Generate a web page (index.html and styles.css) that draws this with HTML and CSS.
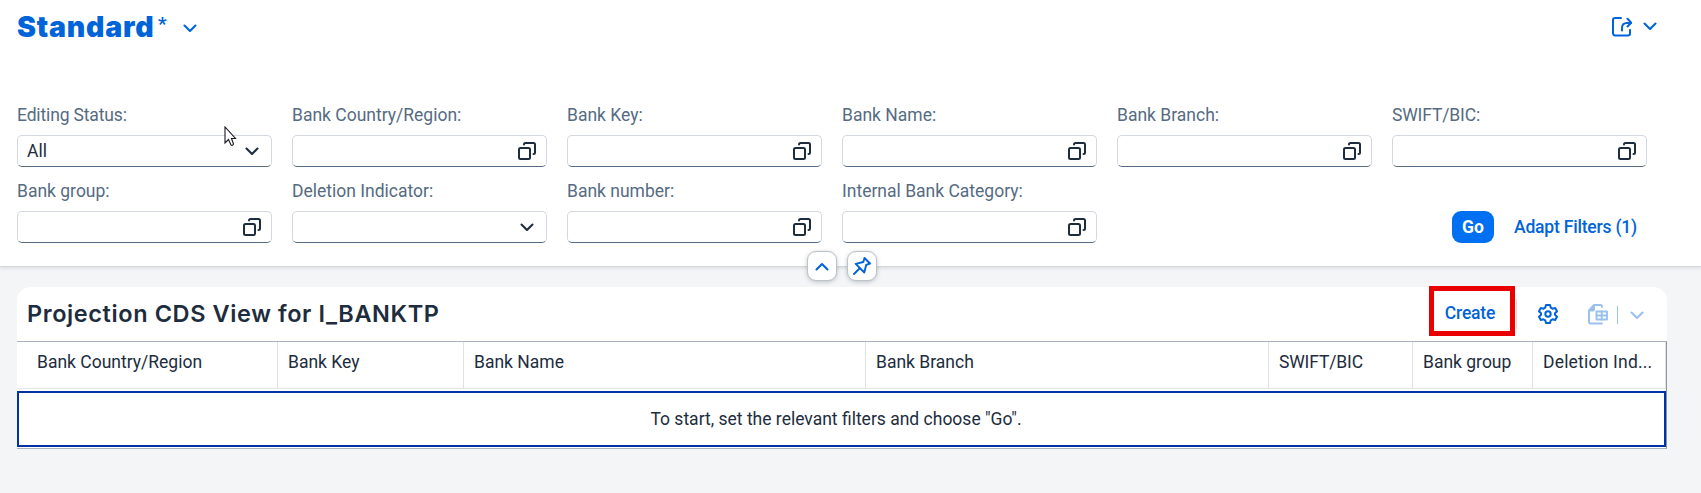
FILE: index.html
```
<!DOCTYPE html>
<html lang="en">
<head>
<meta charset="utf-8">
<title>Manage Banks</title>
<link rel="stylesheet" href="styles.css">
</head>
<body>
<svg class="defs" width="0" height="0">
  <symbol id="down" viewBox="0 0 14 9"><path d="M1.5 1.5 7 7l5.500-5.500" fill="none" stroke="currentColor" stroke-width="2.100" stroke-linecap="round" stroke-linejoin="round"/></symbol>
  <symbol id="help" viewBox="0 0 18 18"><g fill="none" stroke="currentColor" stroke-width="2" stroke-linecap="round" stroke-linejoin="round"><rect x="1" y="6" width="11" height="11" rx="1.500"/><path d="M6 2.600V2.500Q6 1 7.500 1H15.500Q17 1 17 2.500V10.500Q17 12 15.500 12"/></g></symbol>
</svg>
<header class="page-header">
  <div class="variant-bar">
    <h1 class="variant">Standard</h1><span class="dirty">*</span>
    <svg class="chev variant-chev"><use href="#down"/></svg>
    <div class="share">
      <svg width="20" height="20" viewBox="0 0 20 20" fill="none" stroke="currentColor" stroke-width="2" stroke-linecap="round" stroke-linejoin="round"><path d="M9 1H3Q1 1 1 3V16Q1 18.500 3.500 18.500H16Q18 18.500 18 16.500V13"/><path d="M10 13.500V11Q10 6 15 6H19"/><path d="M15.500 1.800 19.200 5.800 15.500 9.500"/></svg>
      <svg class="chev"><use href="#down"/></svg>
    </div>
  </div>
  <div class="filters">
    <div class="field"><label class="tight">Editing Status:</label><div class="input"><span>All</span><svg class="chev"><use href="#down"/></svg></div></div>
    <div class="field"><label>Bank Country/Region:</label><div class="input"><svg class="help"><use href="#help"/></svg></div></div>
    <div class="field"><label>Bank Key:</label><div class="input"><svg class="help"><use href="#help"/></svg></div></div>
    <div class="field"><label>Bank Name:</label><div class="input"><svg class="help"><use href="#help"/></svg></div></div>
    <div class="field"><label>Bank Branch:</label><div class="input"><svg class="help"><use href="#help"/></svg></div></div>
    <div class="field"><label class="tight">SWIFT/BIC:</label><div class="input"><svg class="help"><use href="#help"/></svg></div></div>
    <div class="field"><label>Bank group:</label><div class="input"><svg class="help"><use href="#help"/></svg></div></div>
    <div class="field"><label>Deletion Indicator:</label><div class="input"><svg class="chev"><use href="#down"/></svg></div></div>
    <div class="field"><label>Bank number:</label><div class="input"><svg class="help"><use href="#help"/></svg></div></div>
    <div class="field"><label>Internal Bank Category:</label><div class="input"><svg class="help"><use href="#help"/></svg></div></div>
    <div class="filter-actions"><button class="go">Go</button><button class="link adapt">Adapt Filters (1)</button></div>
  </div>
  <div class="header-toggles">
    <button class="toggle"><svg class="chev up"><use href="#down"/></svg></button>
    <button class="toggle"><svg width="18" height="18" viewBox="0 0 18 18" fill="none" stroke="currentColor" stroke-width="1.900" stroke-linecap="round" stroke-linejoin="round"><path d="M11.500 1 17 6.500 13.200 7.800 11.300 15.500 2.700 6.900 10.300 5Z"/><path d="M6.500 11.500 1 17"/></svg></button>
  </div>
  <svg class="cursor" width="13" height="21" viewBox="0 0 13 21"><path d="M1 1V17L4.500 13.500 7 19Q8.500 20 9.500 18L7.500 12.500H11.500Z" fill="#fff" stroke="#1a1525" stroke-width="1.100"/></svg>
</header>
<main class="card">
  <div class="toolbar">
    <h2>Projection CDS View for I_BANKTP</h2>
    <div class="create-frame"><button class="link create">Create</button></div>
    <i class="sep"></i>
    <svg class="gear" width="20" height="20" viewBox="0 0 20 20" fill="none" stroke="currentColor" stroke-width="2" stroke-linejoin="round"><path d="M8 1H12L12.800 3.700 14.500 4.700 17.200 4 19 7.200 17 9.200V10.800L19 12.800 17.200 16 14.500 15.300 12.800 16.300 12 19H8L7.200 16.300 5.500 15.300 2.800 16 1 12.800 3 10.800V9.200L1 7.200 2.800 4 5.500 4.700 7.200 3.700Z"/><circle cx="10" cy="10" r="2.700"/></svg>
    <svg class="export" width="20" height="21" viewBox="0 0 20 21" fill="none" stroke="currentColor" stroke-width="1.900" stroke-linecap="round" stroke-linejoin="round"><path d="M14 19.500H2.500Q1 19.500 1 18V6.500L6 1H12.500Q14 1 14 3"/><path d="M1.500 6.500 6 1.500V5.500Q6 6.500 5 6.500Z" fill="currentColor"/><rect x="8.500" y="7.500" width="10.500" height="8"/><path d="M8.500 11.500H19M13.700 7.500V15.500"/></svg>
    <i class="bar"></i>
    <svg class="chev pale"><use href="#down"/></svg>
  </div>
  <div class="table">
    <div class="thead"><span>Bank Country/Region</span><span>Bank Key</span><span>Bank Name</span><span>Bank Branch</span><span class="tight">SWIFT/BIC</span><span>Bank group</span><span class="loose">Deletion Ind...</span></div>
    <div class="empty">To start, set the relevant filters and choose "Go".</div>
  </div>
</main>
</body>
</html>
```
FILE: styles.css
```
* { box-sizing: border-box; }
body { margin: 0; height: 493px; overflow: hidden; background: #f4f5f7; color: #1d2d3e; font: 17.5px/22px Roboto, "Liberation Sans", sans-serif; }
svg { display: block; flex: none; }
.defs { position: absolute; }
button { font: inherit; padding: 0; border: 0; background: none; }
.chev { width: 14px; height: 9px; }
.page-header { position: relative; height: 267px; padding: 0 17px; background: #fff; border-bottom: 1px solid #d5d8db; box-shadow: 0 1px 4px rgba(60,70,80,.16); color: #0064d9; }
.variant-bar { display: flex; height: 102px; padding-top: 10px; align-items: flex-start; }
.variant { margin: 0; width: 141px; font: 900 28.5px/34px Inter, Roboto, sans-serif; letter-spacing: .75px; white-space: nowrap; }
.dirty { width: 25px; font-size: 19px; line-height: 28px; font-weight: 700; }
.variant-chev { margin-top: 14px; }
.share { display: flex; gap: 11px; margin: 7px 27px 0 auto; }
.share .chev { margin-top: 5px; }
.filters { display: grid; grid-template-columns: repeat(6, 255px); gap: 11px 20px; }
.field label { display: block; height: 26px; margin-bottom: 7px; line-height: 26px; color: #556b82; white-space: nowrap; }
.field .tight, .tight { letter-spacing: -.15px; }
.loose { letter-spacing: .2px; }
.field { height: 65px; }
.input { display: flex; align-items: center; height: 32px; padding: 0 9px; border: 1px solid #d3d8e0; border-bottom-color: #556b82; border-radius: 5px; color: #1d2d3e; }
.input svg { margin-left: auto; margin-right: 1px; }
.input .chev { margin-right: 3px; }
.help { width: 18px; height: 18px; }
.filter-actions { grid-column: 6; display: flex; align-items: flex-end; height: 65px; gap: 20px; padding-left: 60px; }
.go { width: 42px; height: 32px; border-radius: 9px; background: #0070f2; color: #fff; font-weight: 700; }
.link { color: #0064d9; font-weight: 500; white-space: nowrap; letter-spacing: -.2px; }
.adapt { height: 32px; }
.header-toggles { position: absolute; left: 807px; top: 251px; display: flex; gap: 10px; }
.toggle { display: grid; place-items: center; width: 30px; height: 30px; border: 1px solid #bcc3ca; border-radius: 9px; background: #fff; color: #0064d9; box-shadow: 0 1px 4px rgba(60,70,80,.3); }
.up { transform: rotate(180deg); }
.cursor { position: absolute; left: 224px; top: 126px; }
.card { width: 1650px; margin: 20px 0 0 17px; }
.toolbar { display: flex; align-items: center; height: 54px; padding-left: 10px; background: #fff; border-radius: 14px 14px 0 0; color: #0064d9; }
h2 { margin: 0; width: 1402px; font: 600 23.5px/30px Inter, Roboto, sans-serif; letter-spacing: .6px; color: #1d2d3e; }
.create-frame { flex: none; width: 86px; height: 50px; margin-top: -6px; padding: 4px 4px 0 0; display: grid; place-items: center; border: 5px solid #eb0000; background: #fff; }
.sep { width: 1px; height: 30px; margin-left: 1px; background: #d9d9d9; }
.gear { margin-left: 21px; }
.export { margin-left: 30px; color: #99c1f0; }
.bar { width: 1px; height: 18px; margin: 2px 12px 0 9px; background: #99c1f0; }
.pale { color: #99c1f0; margin-top: 2px; }
.table { height: 108px; border: 1px solid #a8b3bd; border-left: 0; border-right-color: #8f959b; background: #fff; }
.thead { display: grid; grid-template-columns: 261px 186px 402px 403px 144px 120px 133px; height: 47px; border-bottom: 1px solid #e5e5e5; font-weight: 450; }
.thead span { padding: 9px 0 0 10px; border-right: 1px solid #e0e2e4; white-space: nowrap; }
.thead span:first-child { padding-left: 20px; }
.empty { display: grid; place-items: center; height: 56px; margin-top: 2px; border: 2px solid #0032a5; padding-right: 11px; }
```
